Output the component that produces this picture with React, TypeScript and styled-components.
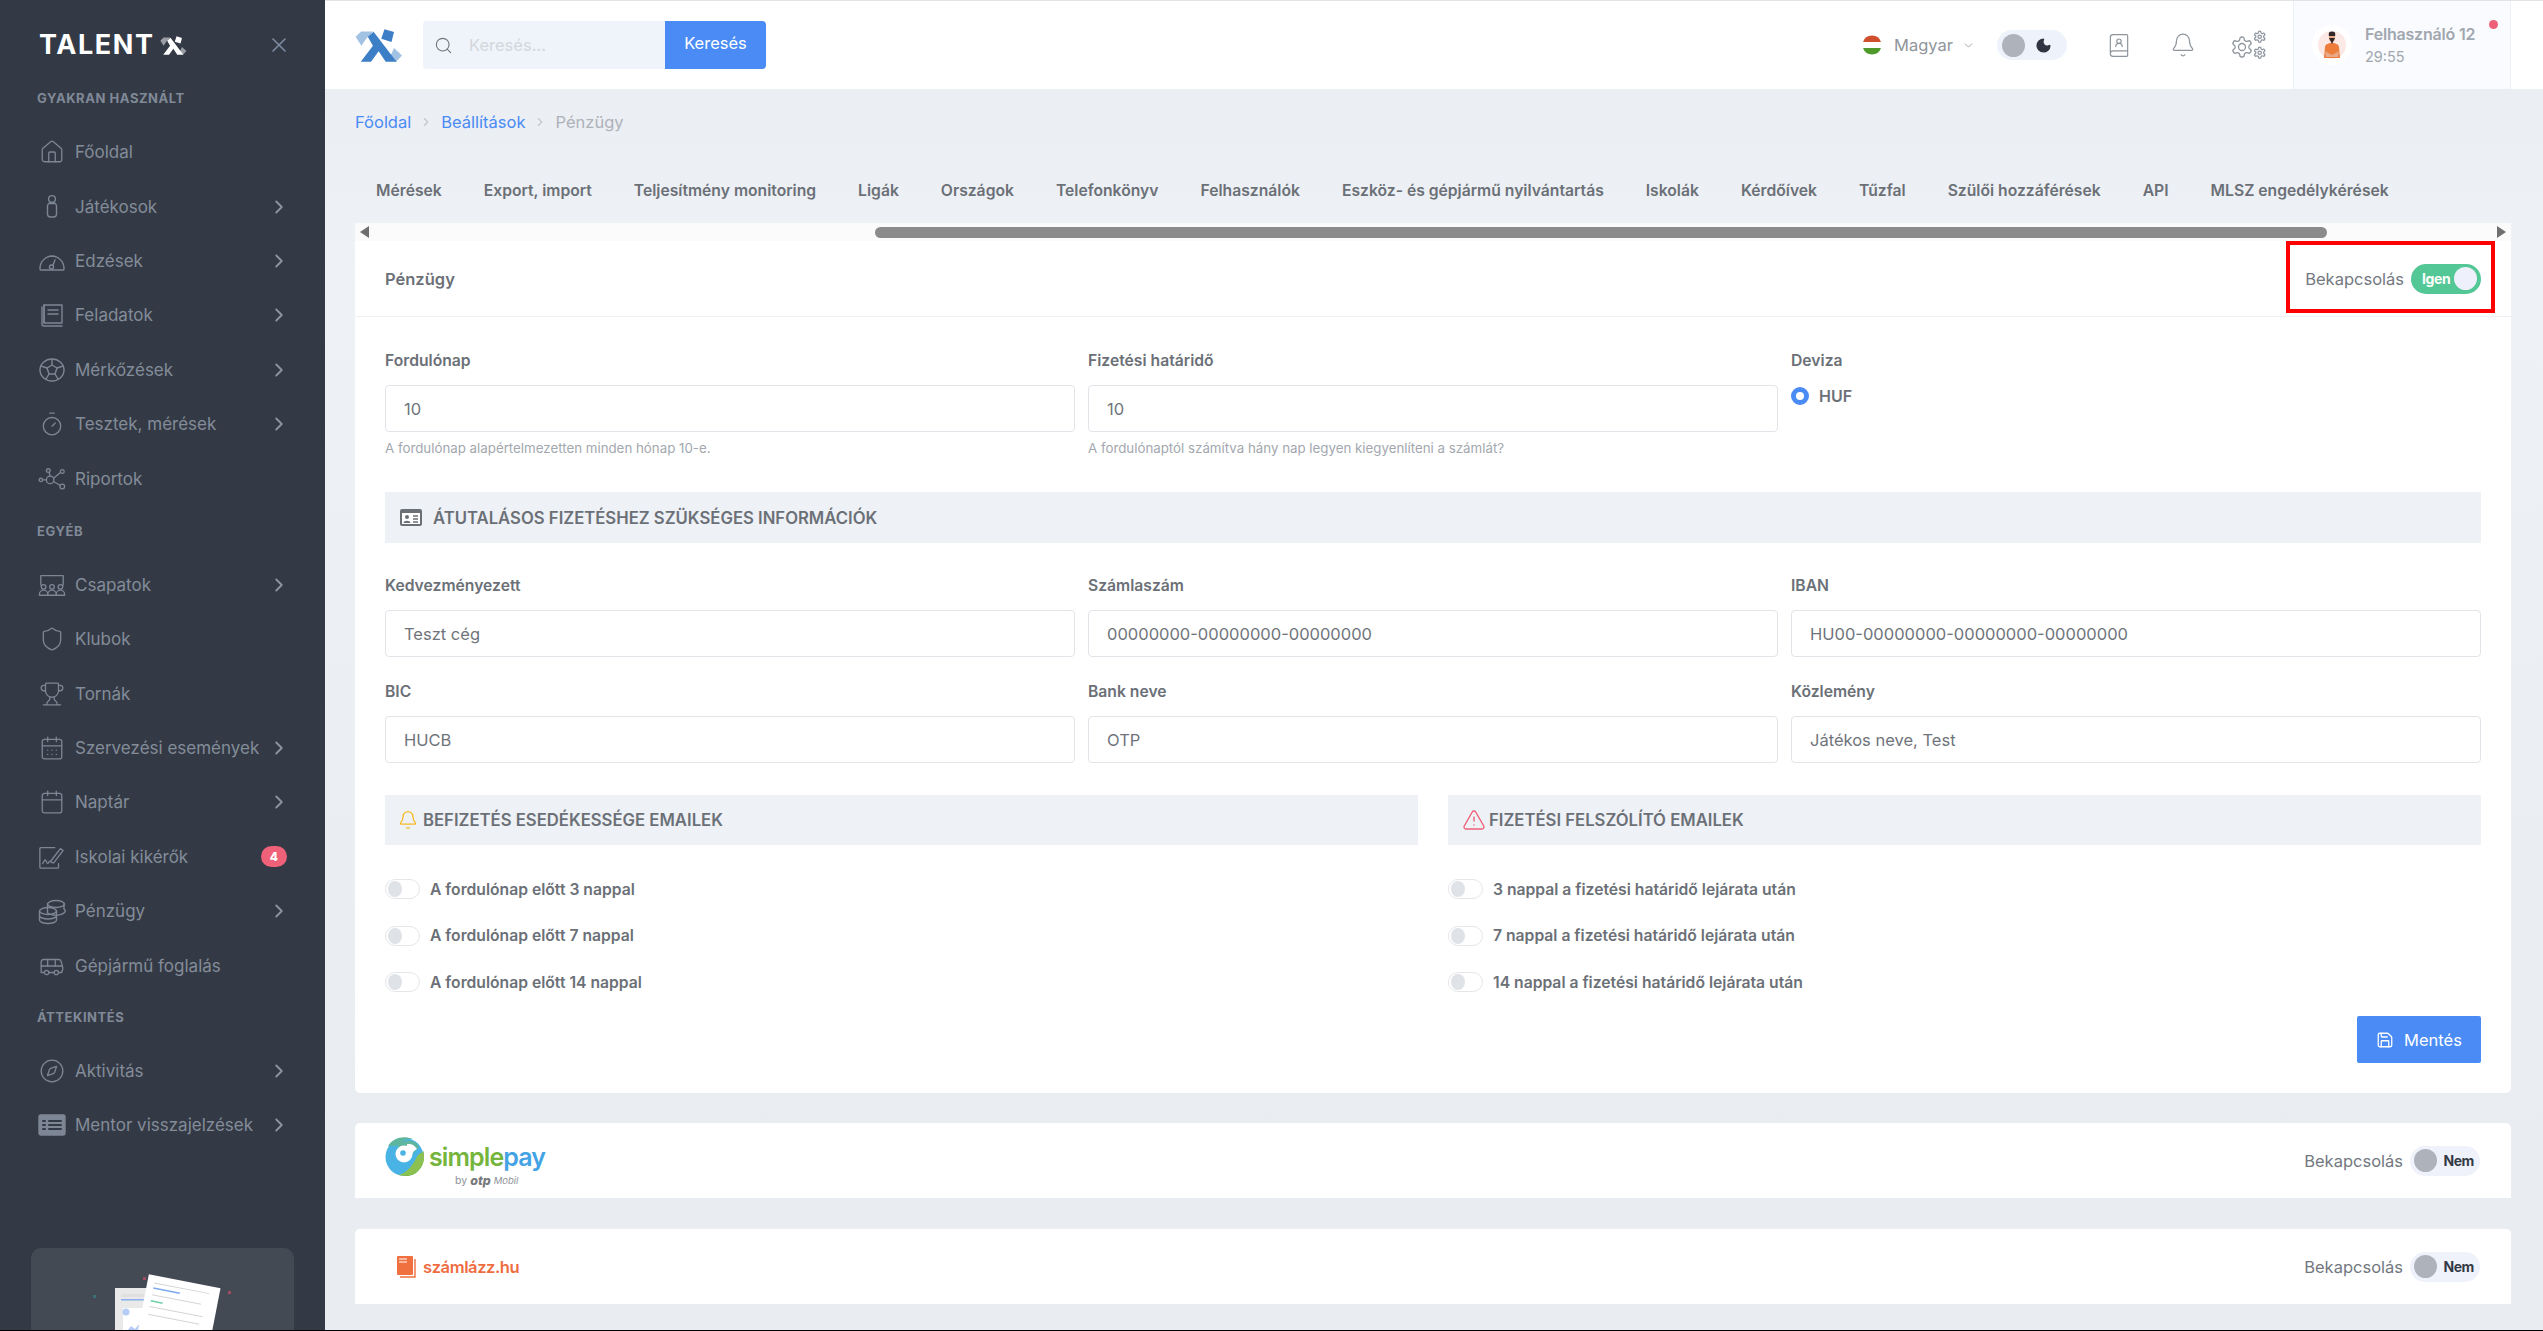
import React from "react";
import styled, { createGlobalStyle } from "styled-components";
import { Bell, ChevronDown, ChevronRight, Moon, Search, X, Save, TriangleAlert, Home, Timer, Trophy, CalendarDays, Calendar, Bus, Compass, Shield, BookUser } from "lucide-react";

const FONT = `Inter, "Noto Sans", "Liberation Sans", sans-serif`;

const Global = createGlobalStyle`
  html, body { margin: 0; padding: 0; background: #e9ecf1; }
  body { font-family: ${FONT}; overflow: hidden; }
  * { box-sizing: border-box; }
`;

const Shell = styled.div`
  display: flex; width: 2543px; height: 1331px; overflow: hidden;
  border-bottom: 1px solid #000;
`;

/* ---------- sidebar ---------- */
const Sidebar = styled.aside`
  width: 325px; flex: none; background: #343a45; display: flex; flex-direction: column;
  padding-top: 30px; overflow: hidden;
`;
const SideBrand = styled.div`
  display: flex; align-items: center; height: 30px; padding: 0 34px 0 39px; justify-content: space-between;
`;
const BrandLeft = styled.div`display: flex; align-items: center; gap: 5px;`;
const BrandText = styled.span`
  font-family: Inter, sans-serif; font-weight: 700; font-size: 27px; letter-spacing: 1.6px; color: #fff; line-height: 30px;
`;
const CloseBtn = styled.span`display: flex; color: #7d8ba1;`;
const SectionTitle = styled.div<{ $top: number }>`
  margin-top: ${p => p.$top}px; padding-left: 37px; height: 20px; line-height: 20px;
  font-size: 13px; font-weight: 700; letter-spacing: 0.55px; color: #808997; text-transform: uppercase;
`;
const NavList = styled.nav`display: flex; flex-direction: column; margin-top: 17px;`;
const NavRow = styled.div`
  display: flex; align-items: center; height: 54.4px; padding: 0 38px 0 37px; color: #7f8896;
`;
const NavIcon = styled.span`display: flex; width: 29px; height: 28px; margin-right: 9px; align-items: center; justify-content: center; flex: none;`;
const NavLabel = styled.span`flex: 1; font-size: 17px; white-space: nowrap; color: #838c99;`;
const NavChevron = styled.span`display: flex; color: #8d95a1; margin-right: -3px;`;
const Badge = styled.span`
  width: 26px; height: 21px; border-radius: 11px; background: #ef6079; color: #fff; font-size: 12px; font-weight: 800;
  display: flex; align-items: center; justify-content: center;
`;
const Widget = styled.div`
  margin: auto 31px 0 31px; height: 100px; flex: none; transform: translateY(18px); border-radius: 10px; background: #434a54; overflow: hidden;
`;
const WidgetArt = styled.svg`display: block; width: 263px; height: 100px;`;

/* ---------- main ---------- */
const Main = styled.div`
  flex: 1; min-width: 0; display: flex; flex-direction: column;
  background: linear-gradient(180deg, #e9ecf1 0%, #eef1f6 20%, #e9ecf1 85%);
`;
const Header = styled.header`
  height: 89px; flex: none; background: #fff; border-top: 1px solid #e3e3e3; display: flex; align-items: center; padding: 0 32px 0 30px;
`;
const SearchGroup = styled.div`display: flex; height: 48px; margin-left: 20px; border-radius: 4px; overflow: hidden;`;
const SearchBox = styled.label`
  width: 242px; background: #eff3fa; display: flex; align-items: center; padding-left: 11px; gap: 14px; color: #73777d;
`;
const SearchInput = styled.input`
  border: 0; outline: 0; background: transparent; width: 170px; font: 400 16.5px ${FONT}; color: #555;
  &::placeholder { color: #d3d7dd; opacity: 1; }
`;
const SearchButton = styled.button`
  width: 101px; border: 0; background: #4a8bf5; color: #fff; font: 400 16.5px ${FONT}; padding: 0 0 4px;
`;
const HeaderRight = styled.div`margin-left: auto; display: flex; align-items: center; height: 100%;`;
const LangBox = styled.div`display: flex; align-items: center; color: #8f959c; font-size: 16.5px;`;
const LangName = styled.span`margin-left: 12px; margin-right: 9px;`;
const ThemeToggle = styled.div`
  width: 70px; height: 30px; border-radius: 15px; background: #eef2fb; margin-left: 22px; display: flex; align-items: center; padding-left: 5px; gap: 10px; margin-right: 39px;
`;
const ThemeKnob = styled.span`width: 23px; height: 23px; border-radius: 50%; background: #aeb3bb;`;
const IconBtn = styled.span<{ $w: number; $mr: number }>`
  display: flex; width: ${p => p.$w}px; margin-right: ${p => p.$mr}px; justify-content: center; color: #8e959d;
`;
const UserPanel = styled.div`
  width: 218px; height: 100%; background: #f9fbfe; border-left: 1px solid #edf0f5; border-right: 1px solid #edf0f5; margin-left: 27px;
  display: flex; align-items: center; padding-left: 18px; position: relative;
`;
const AvatarRing = styled.span`
  width: 40px; height: 40px; border-radius: 50%; background: #fff; display: flex; align-items: center; justify-content: center; flex: none;
`;
const UserText = styled.div`display: flex; flex-direction: column; margin-left: 13px; gap: 4px; color: #a1a7af;`;
const UserName = styled.span`font-size: 16px; font-weight: 600; line-height: 20px; white-space: nowrap; letter-spacing: -0.2px;`;
const UserTime = styled.span`font-size: 14.5px; line-height: 18px;`;
const RedDot = styled.span`
  position: absolute; top: 19px; left: 195px; width: 9px; height: 9px; border-radius: 50%; background: #ef6079;
`;

const Content = styled.div`display: flex; flex-direction: column; padding: 0 32px 0 30px;`;
const Crumbs = styled.div`
  margin-top: 21px; height: 24px; display: flex; align-items: center; font-size: 16.5px; color: #4a8bf5;
`;
const CrumbSep = styled.span`display: flex; color: #c3c7cc; margin: 0 8px;`;
const CrumbLast = styled.span`color: #aeb2b9;`;
const TabBar = styled.div`
  margin-top: 34px; height: 44px; margin-bottom: 11px; display: flex; align-items: center;
`;
const Tab = styled.span`
  padding: 0 21px; font-size: 15.7px; font-weight: 600; color: #6b7077; white-space: nowrap; flex: none;
`;
const ScrollTrack = styled.div`
  height: 18px; background: #fbfbfb; display: flex; align-items: center; justify-content: space-between; padding: 0 5px; position: relative;
`;
const Arrow = styled.span<{ $dir: "l" | "r" }>`
  width: 0; height: 0; border-top: 6px solid transparent; border-bottom: 6px solid transparent;
  ${p => p.$dir === "l" ? "border-right: 9px solid #6f6f6f;" : "border-left: 9px solid #6f6f6f;"}
`;
const ScrollThumb = styled.span`
  position: absolute; left: 520px; width: 1452px; top: 4px; height: 11px; border-radius: 6px; background: #8b8b8b;
`;
const Card = styled.section`
  background: #fff; border-radius: 0 0 5px 5px; position: relative;
`;
const CardHead = styled.div`
  height: 76px; border-bottom: 1px solid #eef0f4; display: flex; align-items: center; justify-content: space-between; padding: 0 30px;
`;
const CardTitle = styled.h2`margin: 0; font-size: 16.5px; font-weight: 600; color: #6b7077;`;
const SwitchRow = styled.div`display: flex; align-items: center; gap: 7px;`;
const SwitchLabel = styled.span`font-size: 16.5px; color: #73787f;`;
const Pill = styled.span<{ $on: boolean }>`
  width: 70px; height: 30px; border-radius: 15px; display: flex; align-items: center; padding: 0 4px;
  background: ${p => p.$on ? "#53c795" : "#eff2fb"}; justify-content: space-between;
  flex-direction: ${p => p.$on ? "row" : "row"};
`;
const PillKnob = styled.span<{ $on: boolean }>`
  width: 23px; height: 23px; border-radius: 50%; background: ${p => p.$on ? "#eef1fb" : "#aeb3bb"};
`;
const PillText = styled.span<{ $on: boolean }>`
  font-size: 14px; font-weight: 700; letter-spacing: -0.4px; color: ${p => p.$on ? "#fff" : "#343a45"}; padding: ${p => p.$on ? "0 0 0 7px" : "0 2px 0 0"};
`;
const RedMark = styled.div`
  position: absolute; left: 1931px; top: 0; width: 209px; height: 72px; border: 4px solid #ff0000; pointer-events: none;
`;
const Body = styled.div`padding: 34px 30px 30px;`;
const Grid3 = styled.div<{ $top?: number }>`
  display: grid; grid-template-columns: repeat(3, 1fr); column-gap: 13px; margin-top: ${p => p.$top ?? 0}px;
`;
const Label = styled.div`height: 20px; line-height: 20px; font-size: 15.7px; font-weight: 600; color: #6b7077;`;
const Input = styled.input`
  display: block; width: 100%; height: 47px; margin-top: 14px; border: 1px solid #e1e4e9; border-radius: 4px; padding: 0 18px; outline: 0; background: #fff;
  font: 400 16.5px ${FONT}; color: #6f747b;
`;
const Help = styled.div`margin-top: 7px; height: 18px; line-height: 18px; font-size: 13.3px; color: #a3a8ae;`;
const Radio = styled.div`display: flex; align-items: center; gap: 10px; margin-top: 15px; font-size: 16px; font-weight: 600; color: #6b7077;`;
const RadioDot = styled.span`width: 18px; height: 18px; border-radius: 50%; border: 5px solid #4a8bf5; background: #fff;`;
const Bar = styled.div<{ $mt: number; $h: number; $pl: number; $gap: number }>`
  margin-top: ${p => p.$mt}px; height: ${p => p.$h}px; background: #eef1f6; display: flex; align-items: center;
  padding-left: ${p => p.$pl}px; gap: ${p => p.$gap}px;
  font-size: 16.7px; font-weight: 600; color: #6b7077; text-transform: uppercase; white-space: nowrap;
`;
const Columns = styled.div`display: grid; grid-template-columns: 1033px 1033px; column-gap: 30px; margin-top: 32px;`;
const ToggleList = styled.div`display: flex; flex-direction: column; gap: 26.5px; margin-top: 34px;`;
const ToggleRow = styled.div`display: flex; align-items: center; gap: 10px; height: 20px; font-size: 15.7px; font-weight: 600; color: #6b7077;`;
const MiniToggle = styled.span`
  width: 35px; height: 20px; border-radius: 10px; border: 1px solid #e4e6ea; background: #fff; display: flex; align-items: center; padding-left: 2px; flex: none;
`;
const MiniKnob = styled.span`width: 14px; height: 16px; border-radius: 50%; background: #dfe3e8;`;
const Actions = styled.div`display: flex; justify-content: flex-end; margin-top: 24px;`;
const SaveBtn = styled.button`
  width: 124px; height: 47px; border: 0; border-radius: 2px; background: #4a8bf5; color: #fff; font: 400 16.5px ${FONT};
  display: flex; align-items: center; justify-content: center; gap: 10px;
`;
const PluginCard = styled.section<{ $mt: number }>`
  margin-top: ${p => p.$mt}px; height: 75px; background: #fff; border-radius: 5px 5px 0 0; display: flex; align-items: center; justify-content: space-between; padding: 0 31px 0 30px;
`;
const SimpleLogo = styled.div`display: flex; align-items: flex-start; height: 50px;`;
const SimpleText = styled.div`display: flex; flex-direction: column; margin-left: 5px;`;
const SimpleWord = styled.span`font-size: 25px; font-weight: 600; letter-spacing: -0.9px; line-height: 36px; color: #75b53d; margin-top: 3px;`;
const PayWord = styled.span`color: #43a3e4;`;
const ByLine = styled.span`display: flex; align-items: center; gap: 3px; font-size: 10.5px; color: #8d9297; margin: -1px 0 0 26px; line-height: 13px;`;
const OtpWord = styled.b`font-style: italic; font-size: 12.5px; font-weight: 800; color: #77797c;`;
const MobilWord = styled.i`font-size: 9.5px;`;
const SzamlaLogo = styled.div`display: flex; align-items: center; gap: 7px; padding-left: 12px; font-size: 16.5px; font-weight: 600; letter-spacing: -0.4px; color: #ef6c3f;`;

const S = 1.4;
const Svg: React.FC<{ w?: number; h?: number; vb?: string; children: React.ReactNode }> = ({ w = 28, h = 28, vb = "0 0 28 28", children }) => (
  <svg width={w} height={h} viewBox={vb} fill="none" stroke="#7d8694" strokeWidth={S} strokeLinecap="round" strokeLinejoin="round">{children}</svg>
);
const L = { size: 26, color: "#7d8694", strokeWidth: 1.2 };

const I = {
  home: <Home {...L} />,
  player: <Svg><circle cx="14" cy="6" r="3.4" /><path d="M9.5 13a4.5 3.5 0 0 1 9 0v8a3 3 0 0 1-3 3h-3a3 3 0 0 1-3-3z" /><path d="M11 10.5h6" /></Svg>,
  gauge: <Svg><path d="M3 23h22a1 1 0 0 0 1-1.4A12.5 12.5 0 0 0 14 9 12.5 12.5 0 0 0 2 21.600 1 1 0 0 0 3 23z" /><circle cx="13.500" cy="20" r="2" /><path d="M15 18l2-5" /></Svg>,
  book: <Svg><path d="M6 4h18v18H6z" /><path d="M6 4v18M4 6v17a2 2 0 0 0 2 2h18" /><path d="M10 9h10M10 13h10" /></Svg>,
  ball: <Svg><ellipse cx="14" cy="14" rx="12" ry="11" /><path d="M14 9l5 3-2 6h-6l-2-6z" /><path d="M14 9V3.500M19 12l6-2M17 18l3 5M11 18l-3 5M9 12l-6-2" /></Svg>,
  timer: <Timer {...L} />,
  nodes: <Svg vb="0 0 30 28"><circle cx="3" cy="15" r="1.800" /><circle cx="11" cy="5" r="2" /><circle cx="13" cy="15" r="4" /><circle cx="26" cy="6" r="2" /><circle cx="26" cy="22" r="2.500" /><path d="M5 15h4M12 7l1 4M17 13l7-6M17 17l7 4" /></Svg>,
  team: <Svg vb="0 0 30 28"><path d="M3 14V4h24v10" /><circle cx="6" cy="16" r="2.500" /><circle cx="15" cy="16" r="2.500" /><circle cx="24" cy="16" r="2.500" /><path d="M1.500 25v-1a4 4 0 0 1 9 0v1zM10.500 25v-1a4 4 0 0 1 9 0v1zM19.500 25v-1a4 4 0 0 1 9 0v1z" /></Svg>,
  shield: <Shield {...L} />,
  trophy: <Trophy {...L} />,
  calDays: <CalendarDays {...L} />,
  cal: <Calendar {...L} />,
  sign: <Svg vb="0 0 30 28"><path d="M18 4H3a1 1 0 0 0-1 1v20a1 1 0 0 0 1 1h18a1 1 0 0 0 1-1v-4" /><path d="M5 21c2-4 3-5 4-2s2 2 3 0 2 2 5 1l10-13-3-2L14 18" /></Svg>,
  coins: <Svg><ellipse cx="18" cy="7" rx="8.500" ry="3.500" /><path d="M9.500 7v9a8 3.500 0 0 0 16.500-4V7" /><ellipse cx="10" cy="14" rx="8.500" ry="3.500" /><path d="M1.500 14v9c0 2 4 3.500 8.500 3.500s8.500-1.500 8.500-3.500v-9M1.500 18.500c0 2 4 3.500 8.500 3.500s8.500-1.500 8.500-3.500" /></Svg>,
  bus: <Bus {...L} />,
  compass: <Compass {...L} />,
  list: <Svg><rect x="1" y="4" width="26" height="20" rx="2" fill="#7d8694" /><path d="M11 10h12M11 14h12M11 18h12M5 10h2M5 14h2M5 18h2" stroke="#343a45" strokeWidth="2" /></Svg>,
};

type Item = { label: string; icon: React.ReactNode; arrow?: boolean; badge?: string };
const nav1: Item[] = [
  { label: "Főoldal", icon: I.home },
  { label: "Játékosok", icon: I.player, arrow: true },
  { label: "Edzések", icon: I.gauge, arrow: true },
  { label: "Feladatok", icon: I.book, arrow: true },
  { label: "Mérkőzések", icon: I.ball, arrow: true },
  { label: "Tesztek, mérések", icon: I.timer, arrow: true },
  { label: "Riportok", icon: I.nodes },
];
const nav2: Item[] = [
  { label: "Csapatok", icon: I.team, arrow: true },
  { label: "Klubok", icon: I.shield },
  { label: "Tornák", icon: I.trophy },
  { label: "Szervezési események", icon: I.calDays, arrow: true },
  { label: "Naptár", icon: I.cal, arrow: true },
  { label: "Iskolai kikérők", icon: I.sign, badge: "4" },
  { label: "Pénzügy", icon: I.coins, arrow: true },
  { label: "Gépjármű foglalás", icon: I.bus },
];
const nav3: Item[] = [
  { label: "Aktivitás", icon: I.compass, arrow: true },
  { label: "Mentor visszajelzések", icon: I.list, arrow: true },
];
const tabs = ["Mérések", "Export, import", "Teljesítmény monitoring", "Ligák", "Országok", "Telefonkönyv", "Felhasználók", "Eszköz- és gépjármű nyilvántartás", "Iskolák", "Kérdőívek", "Tűzfal", "Szülői hozzáférések", "API", "MLSZ engedélykérések"];

const NavGroup: React.FC<{ items: Item[] }> = ({ items }) => (
  <NavList>
    {items.map(it => (
      <NavRow key={it.label}>
        <NavIcon>{it.icon}</NavIcon>
        <NavLabel>{it.label}</NavLabel>
        {it.arrow && <NavChevron><ChevronRight size={22} strokeWidth={2} /></NavChevron>}
        {it.badge && <Badge>{it.badge}</Badge>}
      </NavRow>
    ))}
  </NavList>
);

const BrandMark: React.FC<{ w: number; h: number; a: string; b: string }> = ({ w, h, a, b }) => (
  <svg width={w} height={h} viewBox="28 36 150 106">
    <path d="M30 62 47 45h38L63 68 48 90z" fill={b} />
    <path d="M120 38l30 9-8 31-32-10z" fill={a} />
    <path d="M150 97l25 23-20 21-18-16z" fill={b} />
    <path d="M68 62l18-16 72 94h-34l-22-33-24 33H46l38-50z" fill={a} />
  </svg>
);

const GearPath = "M12.22 2h-.44a2 2 0 0 0-2 2v.18a2 2 0 0 1-1 1.730l-.43.25a2 2 0 0 1-2 0l-.15-.08a2 2 0 0 0-2.730.73l-.22.38a2 2 0 0 0 .73 2.730l.15.1a2 2 0 0 1 1 1.720v.51a2 2 0 0 1-1 1.740l-.15.09a2 2 0 0 0-.73 2.730l.22.38a2 2 0 0 0 2.730.73l.15-.08a2 2 0 0 1 2 0l.43.25a2 2 0 0 1 1 1.730V20a2 2 0 0 0 2 2h.44a2 2 0 0 0 2-2v-.18a2 2 0 0 1 1-1.730l.43-.25a2 2 0 0 1 2 0l.15.08a2 2 0 0 0 2.730-.73l.22-.39a2 2 0 0 0-.73-2.730l-.15-.08a2 2 0 0 1-1-1.740v-.5a2 2 0 0 1 1-1.740l.15-.09a2 2 0 0 0 .73-2.730l-.22-.38a2 2 0 0 0-2.730-.73l-.15.08a2 2 0 0 1-2 0l-.43-.25a2 2 0 0 1-1-1.730V4a2 2 0 0 0-2-2z";

const Gears = () => (
  <svg width="36" height="30" viewBox="0 0 36 30" fill="none" stroke="#8e959d" strokeWidth="1.300" strokeLinejoin="round">
    <g transform="translate(0 5) scale(1)"><path d={GearPath} /><circle cx="12" cy="12" r="3.500" /></g>
    <g transform="translate(23 0) scale(.56)" strokeWidth="2.200"><path d={GearPath} /><circle cx="12" cy="12" r="3" /></g>
    <g transform="translate(23 16) scale(.56)" strokeWidth="2.200"><path d={GearPath} /><circle cx="12" cy="12" r="3" /></g>
  </svg>
);

const Flag = () => (
  <svg width="20" height="20" viewBox="0 0 20 20">
    <path d="M1 7a9.500 9.500 0 0 1 18 0z" fill="#cd4f2e" />
    <rect x="0" y="7" width="20" height="6" fill="#fff" />
    <path d="M1 13a9.500 9.500 0 0 0 18 0z" fill="#4f9a2b" />
  </svg>
);

const Avatar = () => (
  <svg width="28" height="28" viewBox="0 0 28 28">
    <circle cx="14" cy="14" r="14" fill="#fce9e5" />
    <path d="M6 27l1-11c0-2 3-4 7-4s7 2 7 4l1 11z" fill="#ee7c3a" />
    <rect x="11" y="2.500" width="6" height="8" rx="3" fill="#e7a988" />
    <path d="M10.800 5h6.400V2.500a3.200 2 0 0 0-6.400 0zM11 7l3 6 3-6-1 0h-4z" fill="#33272a" />
    <path d="M7 20l7 4 7-4-1 6H8z" fill="#e7a988" />
  </svg>
);

const Doc = () => (
  <WidgetArt viewBox="0 0 263 100">
    <rect x="84" y="40" width="75" height="70" fill="#e9e9e9" />
    <rect x="90" y="46" width="56" height="3" fill="#e0e0e0" />
    <rect x="90" y="51" width="55" height="1.500" fill="#8ab0f0" />
    <rect x="92" y="60" width="40" height="40" fill="#fff" />
    <circle cx="95" cy="64" r="3.500" fill="#b3cdf8" />
    <path d="M93 87l7-9 4 3 6-7 6 9 8 4z" fill="#b3cdf8" />
    <g transform="rotate(11 150 60)">
      <rect x="112" y="33" width="73" height="80" fill="#fff" />
      <rect x="119" y="40" width="56" height="1" fill="#d5d5d5" />
      <rect x="119" y="45" width="27" height="1.500" fill="#7ea8ef" />
      <rect x="119" y="52" width="50" height="1" fill="#d5d5d5" />
      <rect x="119" y="58" width="12" height="1.500" fill="#6fd0a5" />
      <rect x="119" y="64" width="54" height="1" fill="#d5d5d5" />
      <rect x="119" y="72" width="52" height="1" fill="#d5d5d5" />
    </g>
    <rect x="112" y="29" width="3" height="3" fill="#a04a62" />
    <rect x="62" y="47" width="3" height="3" fill="#3b6f77" />
    <rect x="197" y="43" width="3" height="3" fill="#a04a62" />
    <rect x="57" y="85" width="3" height="3" fill="#a04a62" />
    <rect x="191" y="88" width="3" height="3" fill="#3560a0" />
  </WidgetArt>
);

const SimpleMark = () => (
  <svg width="39" height="40" viewBox="0 0 39 40">
    <circle cx="19.500" cy="21" r="19" fill="#49b3e6" />
    <path d="M38 14C37 24 28 40 16 40c12 2 24-6 23-22z" fill="#6db33f" />
    <path d="M13 39c10-2 16-12 20-20 3-3 5-3 6-2 2 14-10 26-26 22z" fill="#8cc152" />
    <path d="M3 10C8 2 18-1 28 3c-6 0-9 1-10 3 8-3 14 0 16 5-3 3-6 6-7 9-4-4-6-4-6 0-5 0-10-5-8-11-3 1-6 1-10 1z" fill="#5fb69e" />
    <circle cx="19" cy="18" r="8.500" fill="#fff" />
    <path d="M22 8a10 10 0 0 1 10 5c-4 2-6 6-7 9l-6-3a3 3 0 0 0 3-3c-1-4 0-6 0-8z" fill="#fff" />
    <circle cx="18" cy="17" r="2.800" fill="#49b3e6" />
  </svg>
);

const SwitchLine: React.FC<{ on: boolean }> = ({ on }) => (
  <SwitchRow>
    <SwitchLabel>Bekapcsolás</SwitchLabel>
    <Pill $on={on}>
      {on ? <><PillText $on>Igen</PillText><PillKnob $on /></> : <><PillKnob $on={false} /><PillText $on={false}>Nem</PillText></>}
    </Pill>
  </SwitchRow>
);

const Field: React.FC<{ label: string; value: string; help?: string }> = ({ label, value, help }) => (
  <div>
    <Label>{label}</Label>
    <Input readOnly value={value} />
    {help && <Help>{help}</Help>}
  </div>
);

const Toggles: React.FC<{ items: string[] }> = ({ items }) => (
  <ToggleList>
    {items.map(t => <ToggleRow key={t}><MiniToggle><MiniKnob /></MiniToggle>{t}</ToggleRow>)}
  </ToggleList>
);

export default function App() {
  return (
    <Shell>
      <Global />
      <Sidebar>
        <SideBrand>
          <BrandLeft>
            <BrandText>TALENT</BrandText>
            <BrandMark w={27} h={21} a="#fff" b="#9a9ea4" />
          </BrandLeft>
          <CloseBtn><X size={24} strokeWidth={1.6} /></CloseBtn>
        </SideBrand>
        <SectionTitle $top={28}>Gyakran használt</SectionTitle>
        <NavGroup items={nav1} />
        <SectionTitle $top={15}>Egyéb</SectionTitle>
        <NavGroup items={nav2} />
        <SectionTitle $top={14}>Áttekintés</SectionTitle>
        <NavGroup items={nav3} />
        <Widget><Doc /></Widget>
      </Sidebar>
      <Main>
        <Header>
          <BrandMark w={48} h={35} a="#3d7fc6" b="#a2c2e4" />
          <SearchGroup>
            <SearchBox>
              <Search size={19} strokeWidth={1.4} />
              <SearchInput placeholder="Keresés..." />
            </SearchBox>
            <SearchButton>Keresés</SearchButton>
          </SearchGroup>
          <HeaderRight>
            <LangBox>
              <Flag />
              <LangName>Magyar</LangName>
              <ChevronDown size={13} strokeWidth={1.5} />
            </LangBox>
            <ThemeToggle>
              <ThemeKnob />
              <Moon size={17} fill="#2f3542" color="#2f3542" />
            </ThemeToggle>
            <IconBtn $w={26} $mr={38}><BookUser size={31} strokeWidth={1.1} /></IconBtn>
            <IconBtn $w={26} $mr={34}><Bell size={30} strokeWidth={1.1} /></IconBtn>
            <IconBtn $w={36} $mr={0}><Gears /></IconBtn>
            <UserPanel>
              <AvatarRing><Avatar /></AvatarRing>
              <UserText>
                <UserName>Felhasználó 12</UserName>
                <UserTime>29:55</UserTime>
              </UserText>
              <RedDot />
            </UserPanel>
          </HeaderRight>
        </Header>
        <Content>
          <Crumbs>
            Főoldal<CrumbSep><ChevronRight size={14} /></CrumbSep>
            Beállítások<CrumbSep><ChevronRight size={14} /></CrumbSep>
            <CrumbLast>Pénzügy</CrumbLast>
          </Crumbs>
          <TabBar>{tabs.map(t => <Tab key={t}>{t}</Tab>)}</TabBar>
          <ScrollTrack>
            <Arrow $dir="l" /><ScrollThumb /><Arrow $dir="r" />
          </ScrollTrack>
          <Card>
            <CardHead>
              <CardTitle>Pénzügy</CardTitle>
              <SwitchLine on />
            </CardHead>
            <RedMark />
            <Body>
              <Grid3>
                <Field label="Fordulónap" value="10" help="A fordulónap alapértelmezetten minden hónap 10-e." />
                <Field label="Fizetési határidő" value="10" help="A fordulónaptól számítva hány nap legyen kiegyenlíteni a számlát?" />
                <div>
                  <Label>Deviza</Label>
                  <Radio><RadioDot />HUF</Radio>
                </div>
              </Grid3>
              <Bar $mt={35} $h={51} $pl={15} $gap={11}>
                <svg width="22" height="17" viewBox="0 0 22 17"><rect width="22" height="17" rx="2" fill="#6b7077" /><rect x="2" y="4" width="18" height="11" fill="#fff" /><circle cx="7" cy="8" r="2" fill="#6b7077" /><path d="M3.500 14c0-3 7-3 7 0z" fill="#6b7077" /><path d="M13 7h5M13 10h5M13 13h5" stroke="#6b7077" strokeWidth="1.300" /></svg>
                Átutalásos fizetéshez szükséges információk
              </Bar>
              <Grid3 $top={33}>
                <Field label="Kedvezményezett" value="Teszt cég" />
                <Field label="Számlaszám" value="00000000-00000000-00000000" />
                <Field label="IBAN" value="HU00-00000000-00000000-00000000" />
              </Grid3>
              <Grid3 $top={25}>
                <Field label="BIC" value="HUCB" />
                <Field label="Bank neve" value="OTP" />
                <Field label="Közlemény" value="Játékos neve, Test" />
              </Grid3>
              <Columns>
                <div>
                  <Bar $mt={0} $h={50} $pl={13} $gap={5}>
                    <Bell size={20} color="#f7b924" strokeWidth={1.600} />
                    Befizetés esedékessége emailek
                  </Bar>
                  <Toggles items={["A fordulónap előtt 3 nappal", "A fordulónap előtt 7 nappal", "A fordulónap előtt 14 nappal"]} />
                </div>
                <div>
                  <Bar $mt={0} $h={50} $pl={14} $gap={3}>
                    <TriangleAlert size={24} color="#ef6079" strokeWidth={1.400} />
                    Fizetési felszólító emailek
                  </Bar>
                  <Toggles items={["3 nappal a fizetési határidő lejárata után", "7 nappal a fizetési határidő lejárata után", "14 nappal a fizetési határidő lejárata után"]} />
                </div>
              </Columns>
              <Actions>
                <SaveBtn><Save size={18} strokeWidth={1.700} />Mentés</SaveBtn>
              </Actions>
            </Body>
          </Card>
          <PluginCard $mt={30}>
            <SimpleLogo>
              <SimpleMark />
              <SimpleText>
                <SimpleWord>simple<PayWord>pay</PayWord></SimpleWord>
                <ByLine>by <OtpWord>otp</OtpWord> <MobilWord>Mobil</MobilWord></ByLine>
              </SimpleText>
            </SimpleLogo>
            <SwitchLine on={false} />
          </PluginCard>
          <PluginCard $mt={31}>
            <SzamlaLogo>
              <svg width="19" height="22" viewBox="0 0 19 22"><rect x="0" y="0" width="16" height="19" rx="1" fill="#f0703f" /><path d="M2 3h8M2 6h8" stroke="#fff" strokeWidth="1.200" /><path d="M18 3v18H3" stroke="#f0703f" strokeWidth="1.400" fill="none" /></svg>
              számlázz.hu
            </SzamlaLogo>
            <SwitchLine on={false} />
          </PluginCard>
        </Content>
      </Main>
    </Shell>
  );
}
